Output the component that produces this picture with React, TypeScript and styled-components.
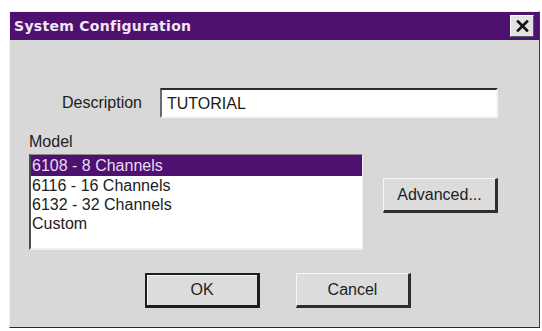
import React from 'react';
import styled, { createGlobalStyle } from 'styled-components';

const GlobalStyle = createGlobalStyle`
  html, body {
    margin: 0;
    padding: 0;
    background: #ffffff;
  }
  body {
    font-family: "Liberation Sans", Arial, sans-serif;
  }
`;

const Page = styled.div`
  padding: 11px 0 0 9px;
`;

const Window = styled.div`
  box-sizing: border-box;
  width: 531px;
  height: 317px;
  display: flex;
  flex-direction: column;
  background: #d8d8d8;
  border: 1px solid;
  border-color: #f2f2f2 #3c3c3c #2a2a2a #f2f2f2;
`;

const TitleBar = styled.div`
  height: 28px;
  display: flex;
  align-items: center;
  justify-content: space-between;
  padding: 0 5px 0 4px;
  background: #4f1170;
`;

const Title = styled.span`
  font-family: "DejaVu Sans", sans-serif;
  font-weight: bold;
  font-size: 14px;
  color: #f1e6f7;
  letter-spacing: 0.3px;
`;

const CloseButton = styled.button`
  box-sizing: border-box;
  width: 24px;
  height: 22px;
  padding: 0;
  display: flex;
  align-items: center;
  justify-content: center;
  background: #e2e2e2;
  border: 1px solid;
  border-color: #ffffff #5a5a5a #5a5a5a #ffffff;
`;

const Body = styled.div`
  flex: 1;
  display: flex;
  flex-direction: column;
  padding: 48px 0 0 19px;
`;

const DescriptionRow = styled.div`
  display: grid;
  grid-template-columns: 113px 338px;
  column-gap: 18px;
  align-items: center;
`;

const Label = styled.label<{ $align?: string }>`
  font-size: 16px;
  color: #202020;
  text-align: ${(p) => p.$align || 'left'};
  line-height: 20px;
`;

const TextBox = styled.div`
  box-sizing: border-box;
  height: 30px;
  padding: 4px 5px 0;
  background: #ffffff;
  border-top: 2px solid #2a2a2a;
  border-left: 2px solid #6a6a6a;
  border-right: 2px solid #f4f4f4;
  border-bottom: 2px solid #f4f4f4;
  font-size: 16px;
  color: #1a1a1a;
  line-height: 20px;
`;

const ModelLabel = styled(Label)`
  margin-top: 14px;
  margin-bottom: 2px;
`;

const ModelRow = styled.div`
  display: flex;
  align-items: flex-start;
`;

const ListBox = styled.ul`
  box-sizing: border-box;
  width: 334px;
  height: 96px;
  margin: 0;
  padding: 0;
  list-style: none;
  background: #ffffff;
  border-top: 1px solid #8a8a8a;
  border-left: 2px solid #4a4a4a;
  border-right: 1px solid #f0f0f0;
  border-bottom: 2px solid #f0f0f0;
`;

const ListItem = styled.li<{ $selected?: boolean }>`
  height: 19px;
  padding-left: 1px;
  font-size: 16px;
  line-height: 19px;
  color: ${(p) => (p.$selected ? '#eadcf2' : '#202020')};
  background: ${(p) => (p.$selected ? '#4f1170' : 'transparent')};
  &:first-child {
    height: 21px;
    line-height: 21px;
  }
`;

const Button = styled.button<{ $default?: boolean }>`
  box-sizing: border-box;
  width: 115px;
  height: 35px;
  padding: 0;
  background: #dcdcdc;
  font-family: "Liberation Sans", Arial, sans-serif;
  font-size: 16px;
  color: #1e1e1e;
  border-style: solid;
  border-width: ${(p) => (p.$default ? '2px 3px 3px 2px' : '1px 3px 3px 1px')};
  border-color: ${(p) =>
    p.$default ? '#1e1e1e #1e1e1e #1e1e1e #1e1e1e' : '#f6f6f6 #2e2e2e #2e2e2e #f6f6f6'};
  box-shadow: ${(p) => (p.$default ? 'inset 1px 1px 0 #f6f6f6' : 'none')};
`;

const SideButton = styled(Button)`
  margin: 24px 0 0 20px;
`;

const ButtonRow = styled.div`
  display: flex;
  gap: 36px;
  margin-top: 23px;
  padding-left: 116px;
`;

const models = ['6108 - 8 Channels', '6116 - 16 Channels', '6132 - 32 Channels', 'Custom'];

const App: React.FC = () => {
  return (
    <Page>
      <GlobalStyle />
      <Window>
        <TitleBar>
          <Title>System Configuration</Title>
          <CloseButton aria-label="Close">
            <svg width="13" height="12" viewBox="0 0 13 12">
              <path d="M2 1.5 L11 10.5 M11 1.5 L2 10.5" stroke="#111" strokeWidth="2.6" strokeLinecap="square" />
            </svg>
          </CloseButton>
        </TitleBar>
        <Body>
          <DescriptionRow>
            <Label $align="right">Description</Label>
            <TextBox>TUTORIAL</TextBox>
          </DescriptionRow>
          <ModelLabel>Model</ModelLabel>
          <ModelRow>
            <ListBox>
              {models.map((m, i) => (
                <ListItem key={m} $selected={i === 0}>
                  {m}
                </ListItem>
              ))}
            </ListBox>
            <SideButton>Advanced...</SideButton>
          </ModelRow>
          <ButtonRow>
            <Button $default>OK</Button>
            <Button>Cancel</Button>
          </ButtonRow>
        </Body>
      </Window>
    </Page>
  );
};

export default App;
